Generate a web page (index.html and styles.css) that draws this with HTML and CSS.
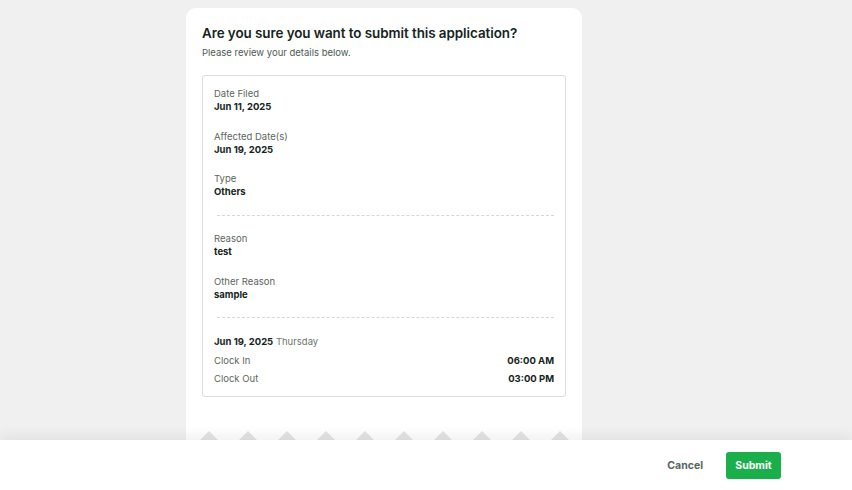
FILE: index.html
```html
<!DOCTYPE html>
<html lang="en">
<head>
    <meta charset="UTF-8">
    <meta name="viewport" content="width=device-width, initial-scale=1.0">
    <title>Submit Application</title>
    <link rel="stylesheet" href="styles.css">
</head>
<body>
    <div class="page">
        <div class="main">
            <div class="confirm-card">
                <h1 class="confirm-title">Are you sure you want to submit this application?</h1>
                <p class="confirm-sub">Please review your details below.</p>

                <div class="details">
                    <div class="field">
                        <div class="field-label">Date Filed</div>
                        <div class="field-value">Jun 11, 2025</div>
                    </div>
                    <div class="field">
                        <div class="field-label">Affected Date(s)</div>
                        <div class="field-value">Jun 19, 2025</div>
                    </div>
                    <div class="field">
                        <div class="field-label">Type</div>
                        <div class="field-value">Others</div>
                    </div>

                    <div class="divider"></div>

                    <div class="field">
                        <div class="field-label">Reason</div>
                        <div class="field-value">test</div>
                    </div>
                    <div class="field">
                        <div class="field-label">Other Reason</div>
                        <div class="field-value">sample</div>
                    </div>

                    <div class="divider"></div>

                    <div class="day-head"><b>Jun 19, 2025</b> <span>Thursday</span></div>
                    <div class="time-row">
                        <span class="time-label">Clock In</span>
                        <span class="time-value">06:00 AM</span>
                    </div>
                    <div class="time-row">
                        <span class="time-label">Clock Out</span>
                        <span class="time-value">03:00 PM</span>
                    </div>
                </div>

                <div class="teeth">
                    <span></span><span></span><span></span><span></span><span></span>
                    <span></span><span></span><span></span><span></span><span></span>
                </div>
            </div>
        </div>

        <div class="footer">
            <button class="btn btn-cancel">Cancel</button>
            <button class="btn btn-submit">Submit</button>
        </div>
    </div>
</body>
</html>
```

FILE: styles.css
```css
* {
    margin: 0;
    padding: 0;
    box-sizing: border-box;
}

body {
    font-family: Inter, 'Noto Sans', sans-serif;
    background: #eff0ef;
    color: #17251d;
}

.page {
    height: 100vh;
    display: flex;
    flex-direction: column;
    overflow: hidden;
}

.main {
    flex: 1;
    overflow: hidden;
    padding: 8px 0 0 186px;
}

.confirm-card {
    width: 396px;
    background: white;
    border-radius: 10px 10px 0 0;
    padding: 15px 16px 0;
}

.confirm-title {
    font-size: 13.4px;
    font-weight: 600;
    line-height: 20px;
    color: #15241c;
    letter-spacing: -0.05px;
}

.confirm-sub {
    font-size: 9.5px;
    line-height: 13px;
    color: #4c5a52;
    margin-top: 3px;
}

.details {
    border: 1px solid #dcdedd;
    border-radius: 3px;
    margin-top: 16px;
    padding: 11px 11px 11px;
}

.field {
    margin-bottom: 16.5px;
    font-size: 9.5px;
    line-height: 13px;
}

.field-label {
    color: #5b6660;
}

.field-value {
    font-weight: 700;
    color: #15241c;
}

.divider {
    border-top: 1px dashed #d6d8d7;
    margin: 0 0 16.5px 3px;
    height: 0;
}

.field + .divider {
    margin-top: 1.5px;
}

.day-head {
    font-size: 9.5px;
    line-height: 13px;
    color: #15241c;
}

.day-head span {
    color: #6b7570;
}

.time-row {
    display: flex;
    justify-content: space-between;
    font-size: 9.5px;
    line-height: 13px;
    margin-top: 6px;
}

.time-row + .time-row {
    margin-top: 5px;
}

.time-label {
    color: #5b6660;
}

.time-value {
    font-weight: 700;
    color: #15241c;
}

.teeth {
    display: flex;
    justify-content: space-around;
    margin: 34px -13px 0;
    height: 10px;
}

.teeth span {
    width: 0;
    height: 0;
    border-left: 10px solid transparent;
    border-right: 10px solid transparent;
    border-bottom: 10px solid #e3e5e4;
}

.footer {
    height: 50px;
    background: white;
    position: relative;
    box-shadow: 0 -5px 12px rgba(0, 0, 0, 0.06);
    display: flex;
    justify-content: flex-end;
    align-items: center;
    gap: 12px;
    padding-right: 71px;
}

.btn {
    font-family: inherit;
    font-size: 10.5px;
    font-weight: 700;
    border: none;
    border-radius: 3px;
    height: 27px;
    cursor: pointer;
}

.btn-cancel {
    background: none;
    color: #55665f;
    padding: 0 11px;
}

.btn-submit {
    background: #1aaf4b;
    color: white;
    width: 55px;
}
```
